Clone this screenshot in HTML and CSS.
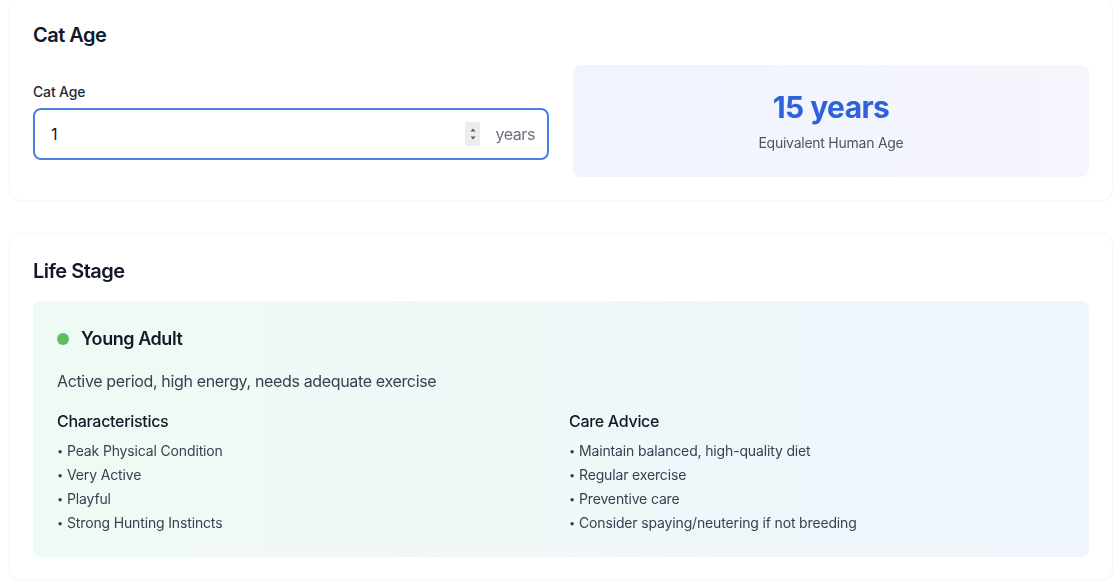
FILE: index.html
```html
<!DOCTYPE html>
<html lang="en">
<head>
    <meta charset="UTF-8">
    <meta name="viewport" content="width=device-width, initial-scale=1.0">
    <title>Cat Age Calculator</title>
    <link rel="stylesheet" href="styles.css">
</head>
<body>
    <div class="page">
        <section class="card">
            <h2>Cat Age</h2>
            <div class="calc">
                <div class="field">
                    <label for="catAge">Cat Age</label>
                    <div class="input-wrap">
                        <input type="number" id="catAge" value="1" min="0" autofocus>
                        <span class="spinner">
                            <svg width="8" height="18" viewBox="0 0 8 18"><path d="M1.5 6.5 L4 3.5 L6.5 6.5 Z" fill="#555"/><path d="M1.5 11.5 L4 14.5 L6.5 11.5 Z" fill="#555"/></svg>
                        </span>
                        <span class="unit">years</span>
                    </div>
                </div>
                <div class="result">
                    <div class="result-value"><span id="humanAge">15</span> years</div>
                    <div class="result-label">Equivalent Human Age</div>
                </div>
            </div>
        </section>

        <section class="card">
            <h2>Life Stage</h2>
            <div class="stage">
                <div class="stage-title">
                    <span class="dot"></span>
                    <span>Young Adult</span>
                </div>
                <p class="stage-desc">Active period, high energy, needs adequate exercise</p>
                <div class="stage-cols">
                    <div>
                        <h4>Characteristics</h4>
                        <ul>
                            <li>Peak Physical Condition</li>
                            <li>Very Active</li>
                            <li>Playful</li>
                            <li>Strong Hunting Instincts</li>
                        </ul>
                    </div>
                    <div>
                        <h4>Care Advice</h4>
                        <ul>
                            <li>Maintain balanced, high-quality diet</li>
                            <li>Regular exercise</li>
                            <li>Preventive care</li>
                            <li>Consider spaying/neutering if not breeding</li>
                        </ul>
                    </div>
                </div>
            </div>
        </section>
    </div>

    <script>
        const input = document.getElementById('catAge');
        const out = document.getElementById('humanAge');

        function humanAge(age) {
            if (age <= 0) return 0;
            if (age <= 1) return Math.round(15 * age);
            if (age <= 2) return Math.round(15 + 9 * (age - 1));
            return Math.round(24 + 4 * (age - 2));
        }

        input.addEventListener('input', function () {
            out.textContent = humanAge(parseFloat(input.value) || 0);
        });
    </script>
</body>
</html>
```

FILE: styles.css
```css
body {
    margin: 0;
    background: #ffffff;
    font-family: Inter, "Noto Sans", "Liberation Sans", sans-serif;
    color: #111827;
}
.page {
    margin: -3px 0 0 9px;
    width: 1104px;
    display: flex;
    flex-direction: column;
    gap: 32px;
}
.card {
    background: #fff;
    border: 1px solid #f7f7f8;
    border-radius: 12px;
    box-shadow: 0 1px 2px rgba(0, 0, 0, 0.025);
    padding: 23px;
}
.card h2 {
    margin: 0 0 16px;
    font-size: 20px;
    line-height: 28px;
    font-weight: 600;
    letter-spacing: -0.5px;
}
.calc {
    display: grid;
    grid-template-columns: 1fr 1fr;
    gap: 24px;
    align-items: center;
}
.field label {
    display: block;
    font-size: 14px;
    line-height: 20px;
    font-weight: 450;
    letter-spacing: -0.15px;
    color: #1f2937;
    margin-bottom: 6px;
}
.input-wrap {
    display: flex;
    align-items: center;
    height: 52px;
    box-sizing: border-box;
    border: 2px solid #4a7fe3;
    border-radius: 8px;
    padding: 0 12px 0 16px;
}
.input-wrap input {
    flex: 1;
    border: none;
    outline: none;
    font: inherit;
    font-size: 16px;
    color: #111827;
    caret-color: #111827;
    background: transparent;
    padding: 0;
    -moz-appearance: textfield;
}
.input-wrap input::-webkit-inner-spin-button,
.input-wrap input::-webkit-outer-spin-button {
    -webkit-appearance: none;
    margin: 0;
}
.spinner {
    display: flex;
    align-items: center;
    justify-content: center;
    width: 15px;
    height: 24px;
    background: #ececec;
    border-radius: 2px;
    margin-right: 15px;
}
.unit {
    font-size: 16px;
    letter-spacing: -0.4px;
    color: #6b7280;
}
.result {
    background: linear-gradient(to right, #eff4fe, #f6f5fe);
    border-radius: 8px;
    padding: 24px;
    text-align: center;
}
.result-value {
    font-size: 30px;
    line-height: 36px;
    font-weight: 700;
    letter-spacing: -0.6px;
    color: #2f62d9;
}
.result-label {
    margin-top: 8px;
    font-size: 14px;
    line-height: 20px;
    letter-spacing: -0.25px;
    color: #4b5563;
}
.stage {
    background: linear-gradient(to right, #f0faf4, #eff5fd);
    border-radius: 8px;
    padding: 24px;
}
.stage-title {
    display: flex;
    align-items: center;
    gap: 12px;
    font-size: 18px;
    line-height: 28px;
    font-weight: 600;
    letter-spacing: -0.45px;
    color: #111827;
}
.dot {
    width: 12px;
    height: 12px;
    border-radius: 50%;
    background: #5cbd62;
}
.stage-desc {
    margin: 16px 0;
    font-size: 16px;
    line-height: 24px;
    letter-spacing: -0.35px;
    color: #374151;
}
.stage-cols {
    display: grid;
    grid-template-columns: 1fr 1fr;
    gap: 16px;
}
.stage-cols h4 {
    margin: 0 0 8px;
    font-size: 16px;
    line-height: 24px;
    font-weight: 450;
    letter-spacing: -0.3px;
    color: #111827;
}
.stage-cols ul {
    list-style: none;
    margin: 0;
    padding: 0;
    display: flex;
    flex-direction: column;
    gap: 4px;
}
.stage-cols li {
    font-size: 14px;
    line-height: 20px;
    letter-spacing: -0.15px;
    color: #374151;
}
.stage-cols li::before {
    content: "\2022";
    display: inline-block;
    font-size: 11px;
    width: 10px;
    vertical-align: 1px;
}
```
